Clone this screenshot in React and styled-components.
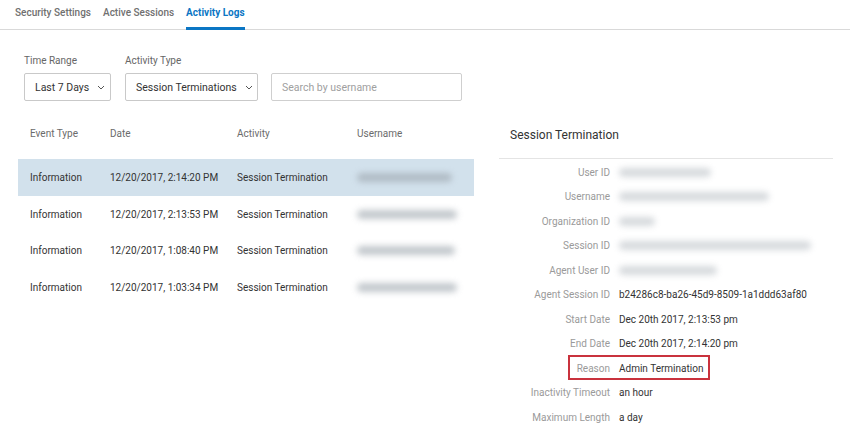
import React from 'react';
import styled, { createGlobalStyle } from 'styled-components';

const GlobalStyle = createGlobalStyle`
  html, body {
    margin: 0;
    padding: 0;
    background: #fff;
    font-family: Roboto, "Liberation Sans", Arial, sans-serif;
    color: #333;
  }
  * { box-sizing: border-box; }
`;

const Page = styled.div`
  width: 850px;
  height: 425px;
  overflow: hidden;
`;

const Tabs = styled.nav`
  display: flex;
  gap: 12px;
  padding-left: 15px;
  height: 30px;
  border-bottom: 1px solid #d9d9d9;
`;

const Tab = styled.div`
  font-size: 10px;
  font-weight: ${({ $active }) => ($active ? 700 : 500)};
  color: ${({ $active }) => ($active ? '#0b76c4' : '#707070')};
  padding-top: 7px;
  height: 30px;
  border-bottom: 3px solid ${({ $active }) => ($active ? '#0b76c4' : 'transparent')};
  margin-bottom: -1px;
`;

const Body = styled.div`
  display: flex;
  padding: 25px 0 0 0;
`;

const Left = styled.div`
  width: 474px;
  padding-left: 18px;
`;

const Filters = styled.div`
  display: flex;
  align-items: flex-end;
  gap: 14px;
  padding-left: 6px;
`;

const Field = styled.div`
  display: flex;
  flex-direction: column;
  gap: 7px;
`;

const Label = styled.div`
  font-size: 10px;
  color: #666;
`;

const Select = styled.div`
  height: 28px;
  width: ${({ $w }) => $w}px;
  border: 1px solid #c9c9c9;
  border-radius: 2px;
  display: flex;
  align-items: center;
  padding-left: 10px;
  gap: 8px;
  font-size: 10.5px;
  color: #333;
`;

const Search = styled.div`
  height: 28px;
  width: 191px;
  border: 1px solid #cfcfcf;
  border-radius: 2px;
  display: flex;
  align-items: center;
  padding-left: 10px;
  font-size: 10.5px;
  color: #a0a0a0;
  margin-left: -1px;
`;

const Table = styled.div`
  margin-top: 20px;
`;

const Row = styled.div`
  display: grid;
  grid-template-columns: 80px 127px 120px 1fr;
  align-items: center;
  height: ${({ $h }) => $h}px;
  padding-left: 12px;
  font-size: 10px;
  background: ${({ $selected }) => ($selected ? '#d2e1ec' : 'transparent')};
  color: ${({ $head }) => ($head ? '#6b6b6b' : '#333')};
`;

const Blur = styled.div`
  height: 9px;
  width: ${({ $w }) => $w}px;
  background: #9aa3ab;
  border-radius: 5px;
  filter: blur(3px);
  opacity: ${({ $o }) => $o || 0.6};
`;

const Right = styled.div`
  width: 334px;
  margin-left: 25px;
  padding-top: 65px;
`;

const PanelTitle = styled.div`
  font-size: 12px;
  color: #333;
  padding-left: 11px;
  height: 39px;
  border-bottom: 1px solid #e4e4e4;
  padding-top: 8px;
`;

const Details = styled.div`
  padding-top: 1px;
`;

const DetailRow = styled.div`
  display: grid;
  grid-template-columns: 111px 1fr;
  column-gap: 9px;
  align-items: center;
  height: 24.5px;
  font-size: 10px;
`;

const Key = styled.div`
  text-align: right;
  color: #9a9a9a;
`;

const Value = styled.div`
  color: #333;
  white-space: nowrap;
`;

const Highlight = styled.div`
  position: absolute;
  left: 69px;
  top: -1px;
  width: 142px;
  height: 25px;
  border: 2px solid #c9323d;
  pointer-events: none;
`;

const Wrap = styled.div`
  position: relative;
`;

const Chevron = () => (
  <svg width="8" height="5" viewBox="0 0 8 5" fill="none" stroke="#555" strokeWidth="1">
    <path d="M1 1l3 3 3-3" />
  </svg>
);

const rows = [
  { date: '12/20/2017, 2:14:20 PM', w: 95, selected: true },
  { date: '12/20/2017, 2:13:53 PM', w: 100 },
  { date: '12/20/2017, 1:08:40 PM', w: 98 },
  { date: '12/20/2017, 1:03:34 PM', w: 100 },
];

const details = [
  { k: 'User ID', blur: 92 },
  { k: 'Username', blur: 150 },
  { k: 'Organization ID', blur: 36 },
  { k: 'Session ID', blur: 192 },
  { k: 'Agent User ID', blur: 98 },
  { k: 'Agent Session ID', v: 'b24286c8-ba26-45d9-8509-1a1ddd63af80' },
  { k: 'Start Date', v: 'Dec 20th 2017, 2:13:53 pm' },
  { k: 'End Date', v: 'Dec 20th 2017, 2:14:20 pm' },
  { k: 'Reason', v: 'Admin Termination', highlight: true },
  { k: 'Inactivity Timeout', v: 'an hour' },
  { k: 'Maximum Length', v: 'a day' },
];

export default function App() {
  return (
    <Page>
      <GlobalStyle />
      <Tabs>
        <Tab>Security Settings</Tab>
        <Tab>Active Sessions</Tab>
        <Tab $active>Activity Logs</Tab>
      </Tabs>
      <Body>
        <Left>
          <Filters>
            <Field>
              <Label>Time Range</Label>
              <Select $w={87}>Last 7 Days <Chevron /></Select>
            </Field>
            <Field>
              <Label>Activity Type</Label>
              <Select $w={133}>Session Terminations <Chevron /></Select>
            </Field>
            <Search>Search by username</Search>
          </Filters>
          <Table>
            <Row $head $h={24}>
              <div>Event Type</div>
              <div>Date</div>
              <div>Activity</div>
              <div>Username</div>
            </Row>
            <div style={{ height: 14 }} />
            {rows.map((r) => (
              <Row key={r.date} $h={36.7} $selected={r.selected}>
                <div>Information</div>
                <div>{r.date}</div>
                <div>Session Termination</div>
                <Blur $w={r.w} />
              </Row>
            ))}
          </Table>
        </Left>
        <Right>
          <PanelTitle>Session Termination</PanelTitle>
          <Details>
            {details.map((d) => (
              <Wrap key={d.k}>
                <DetailRow>
                  <Key>{d.k}</Key>
                  {d.v ? <Value>{d.v}</Value> : <Blur $w={d.blur} $o={0.4} />}
                </DetailRow>
                {d.highlight && <Highlight />}
              </Wrap>
            ))}
          </Details>
        </Right>
      </Body>
    </Page>
  );
}
